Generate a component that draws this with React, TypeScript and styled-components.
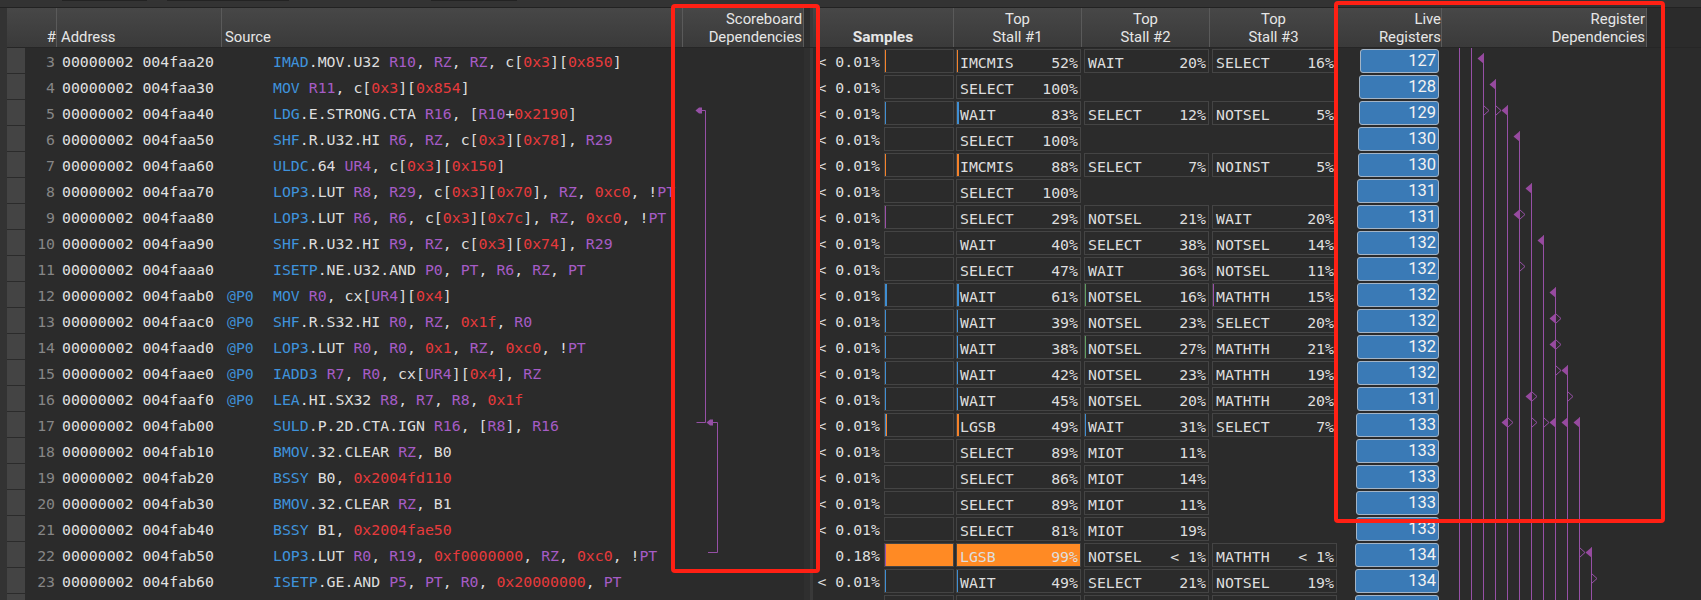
import React from "react";
import styled, { createGlobalStyle, css } from "styled-components";

const GlobalStyle = createGlobalStyle`
  html, body { margin: 0; padding: 0; background: #2b2b2b; overflow: hidden; }
`;

const ORANGE = "#f5822a";
const BLUE = "#3f8ed2";
const PURPLE = "#9a4fa8";
const GREEN = "#5f9f62";
const COLUMNS = "50px 165px 461px 121px 9px 141px 128px 128px 128px 104px 205px";
const MONO = `"DejaVu Sans Mono", "Liberation Mono", monospace`;

const Page = styled.div`
  position: relative;
  width: 1701px;
  height: 600px;
  overflow: hidden;
  background: #2b2b2b;
  font-family: Roboto, "Liberation Sans", sans-serif;
`;

const TopStrip = styled.div`
  display: flex;
  height: 7px;
  padding-left: 62px;
  background: #333333;
  border-bottom: 1px solid #222222;
`;

const StripButton = styled.div<{ $width: number; $skip: number }>`
  width: ${(p) => p.$width}px;
  margin-left: ${(p) => p.$skip}px;
  height: 1px;
  background: #232323;
`;

const Table = styled.div`
  display: flex;
  height: 592px;
`;

const SideMargin = styled.div`
  width: 7px;
  flex: none;
  background: #333333;
`;

const Grid = styled.div`
  flex: 1;
  min-width: 0;
`;

const HeaderRow = styled.div`
  display: grid;
  grid-template-columns: ${COLUMNS} 1fr;
  height: 39px;
  border-bottom: 1px solid #262626;
`;

const HeaderCell = styled.div<{ $align?: "left" | "right" | "center"; $bold?: boolean; $pad?: number }>`
  box-sizing: border-box;
  height: 39px;
  display: flex;
  flex-direction: column;
  justify-content: flex-end;
  padding: 0 ${(p) => p.$pad ?? 1}px 1px ${(p) => p.$pad ?? 1}px;
  background: linear-gradient(#474747, #3a3a3a);
  border-right: 1px solid #5a5a5a;
  color: #e6e6e6;
  font-size: ${(p) => (p.$bold ? 15.5 : 14.85)}px;
  line-height: 17.5px;
  white-space: nowrap;
  text-align: ${(p) => p.$align ?? "left"};
  font-weight: ${(p) => (p.$bold ? 700 : 400)};
`;

const HeaderSplitter = styled.div`
  height: 39px;
  background: linear-gradient(90deg, #2e2e2e 0 6px, #3a3a3a 6px);
`;

const HeaderRest = styled.div`
  background: #2b2b2b;
`;

const Row = styled.div`
  display: grid;
  grid-template-columns: ${COLUMNS} 1fr;
  height: 26px;
  font-family: ${MONO};
  font-size: 14.85px;
  color: #dedede;
  white-space: nowrap;
`;

const IndexCell = styled.div`
  display: flex;
  justify-content: space-between;
  line-height: 28px;
  padding-right: 2px;
  color: #868686;
`;

const GutterTile = styled.div`
  width: 18px;
  height: 25px;
  background: #444444;
`;

const AddressCell = styled.div`
  padding-left: 5px;
  line-height: 28px;
  color: #e0e0e0;
`;

const SourceCell = styled.div`
  display: flex;
  line-height: 28px;
  padding-left: 5px;
`;

const Predicate = styled.span`
  width: 46px;
  flex: none;
  color: ${BLUE};
`;

const Token = styled.span<{ $kind: "op" | "reg" | "hex" | "text" }>`
  color: ${(p) =>
    ({ op: "#3f93dc", reg: "#a65cc6", hex: "#e63a3c", text: "#dedede" })[p.$kind]};
`;

const EmptyCell = styled.div``;

const SplitterCell = styled.div`
  background: linear-gradient(90deg, #2f2f2f 0 6px, #393939 6px);
`;

const SamplesCell = styled.div`
  display: flex;
  justify-content: flex-end;
  align-items: flex-start;
  gap: 4px;
  line-height: 28px;
`;

const Box = styled.div<{ $filled?: boolean }>`
  box-sizing: border-box;
  display: flex;
  height: 24px;
  margin-top: 1px;
  border: 1px solid #444444;
  background: ${(p) => (p.$filled ? "#ff8a24" : "transparent")};
`;

const BarBox = styled(Box)`
  width: 70px;
  flex: none;
`;

const StallBox = styled(Box)`
  position: relative;
  justify-content: space-between;
  margin-left: 2px;
  margin-right: 1px;
  padding: 0 2px 0 3px;
  line-height: 26px;
  color: #dedede;
`;

const Accent = styled.div<{ $color: string; $w: number }>`
  flex: none;
  width: ${(p) => p.$w}px;
  height: 100%;
  background: ${(p) => p.$color};
`;

const StallAccent = styled(Accent)`
  position: absolute;
  left: 0;
  top: 0;
`;

const LiveCell = styled.div`
  display: flex;
  justify-content: flex-end;
  padding-right: 3px;
`;

const Pill = styled.div`
  box-sizing: border-box;
  height: 24px;
  margin-top: 1px;
  padding-right: 2px;
  border: 1px solid #a3b4c6;
  border-radius: 3px;
  background: #3a7ab6;
  color: #f2f2f2;
  font-family: Roboto, "Liberation Sans", sans-serif;
  font-size: 16.5px;
  line-height: 22px;
  text-align: right;
`;

const DepOverlay = styled.svg`
  position: absolute;
  left: 0;
  top: 0;
  pointer-events: none;
`;

const Callout = styled.div<{ $variant: "scoreboard" | "register" }>`
  position: absolute;
  box-sizing: border-box;
  border: 4px solid #ff2014;
  border-radius: 4px;
  pointer-events: none;
  ${(p) =>
    p.$variant === "scoreboard"
      ? css`
          left: 671px;
          top: 4px;
          width: 149px;
          height: 569px;
        `
      : css`
          left: 1334px;
          top: 1px;
          width: 331px;
          height: 522px;
        `}
`;

type Stall = { name: string; pct: string; accent?: [string, number]; fill?: boolean };
type RowData = {
  n: number;
  addr: string;
  pred?: boolean;
  src: string;
  samples: string;
  bar?: [string, number][];
  fill?: boolean;
  stalls: Stall[];
  live: number;
};

const s = (name: string, pct: string, accent?: [string, number], fill?: boolean): Stall => ({ name, pct, accent, fill });
const LT = "< 0.01%";

const rows: RowData[] = [
  { n: 3, addr: "004faa20", src: "IMAD.MOV.U32 R10, RZ, RZ, c[0x3][0x850]", samples: LT, bar: [[ORANGE, 1]], stalls: [s("IMCMIS", "52%", [ORANGE, 1]), s("WAIT", "20%"), s("SELECT", "16%")], live: 127 },
  { n: 4, addr: "004faa30", src: "MOV R11, c[0x3][0x854]", samples: LT, stalls: [s("SELECT", "100%")], live: 128 },
  { n: 5, addr: "004faa40", src: "LDG.E.STRONG.CTA R16, [R10+0x2190]", samples: LT, bar: [[BLUE, 1]], stalls: [s("WAIT", "83%", [BLUE, 2]), s("SELECT", "12%"), s("NOTSEL", "5%")], live: 129 },
  { n: 6, addr: "004faa50", src: "SHF.R.U32.HI R6, RZ, c[0x3][0x78], R29", samples: LT, stalls: [s("SELECT", "100%")], live: 130 },
  { n: 7, addr: "004faa60", src: "ULDC.64 UR4, c[0x3][0x150]", samples: LT, bar: [[ORANGE, 1]], stalls: [s("IMCMIS", "88%", [ORANGE, 2]), s("SELECT", "7%"), s("NOINST", "5%")], live: 130 },
  { n: 8, addr: "004faa70", src: "LOP3.LUT R8, R29, c[0x3][0x70], RZ, 0xc0, !PT", samples: LT, stalls: [s("SELECT", "100%")], live: 131 },
  { n: 9, addr: "004faa80", src: "LOP3.LUT R6, R6, c[0x3][0x7c], RZ, 0xc0, !PT", samples: LT, bar: [[PURPLE, 1]], stalls: [s("SELECT", "29%"), s("NOTSEL", "21%"), s("WAIT", "20%")], live: 131 },
  { n: 10, addr: "004faa90", src: "SHF.R.U32.HI R9, RZ, c[0x3][0x74], R29", samples: LT, stalls: [s("WAIT", "40%"), s("SELECT", "38%"), s("NOTSEL", "14%")], live: 132 },
  { n: 11, addr: "004faaa0", src: "ISETP.NE.U32.AND P0, PT, R6, RZ, PT", samples: LT, stalls: [s("SELECT", "47%"), s("WAIT", "36%"), s("NOTSEL", "11%")], live: 132 },
  { n: 12, addr: "004faab0", pred: true, src: "MOV R0, cx[UR4][0x4]", samples: LT, bar: [[BLUE, 2]], stalls: [s("WAIT", "61%", [BLUE, 2]), s("NOTSEL", "16%", [GREEN, 1]), s("MATHTH", "15%", [PURPLE, 1])], live: 132 },
  { n: 13, addr: "004faac0", pred: true, src: "SHF.R.S32.HI R0, RZ, 0x1f, R0", samples: LT, bar: [[BLUE, 1]], stalls: [s("WAIT", "39%", [BLUE, 1]), s("NOTSEL", "23%"), s("SELECT", "20%")], live: 132 },
  { n: 14, addr: "004faad0", pred: true, src: "LOP3.LUT R0, R0, 0x1, RZ, 0xc0, !PT", samples: LT, bar: [[BLUE, 1]], stalls: [s("WAIT", "38%", [BLUE, 1]), s("NOTSEL", "27%", [GREEN, 1]), s("MATHTH", "21%")], live: 132 },
  { n: 15, addr: "004faae0", pred: true, src: "IADD3 R7, R0, cx[UR4][0x4], RZ", samples: LT, bar: [[BLUE, 1]], stalls: [s("WAIT", "42%", [BLUE, 1]), s("NOTSEL", "23%"), s("MATHTH", "19%")], live: 132 },
  { n: 16, addr: "004faaf0", pred: true, src: "LEA.HI.SX32 R8, R7, R8, 0x1f", samples: LT, bar: [[BLUE, 1]], stalls: [s("WAIT", "45%", [BLUE, 1]), s("NOTSEL", "20%"), s("MATHTH", "20%")], live: 131 },
  { n: 17, addr: "004fab00", src: "SULD.P.2D.CTA.IGN R16, [R8], R16", samples: LT, bar: [[BLUE, 1], [ORANGE, 1]], stalls: [s("LGSB", "49%", [ORANGE, 2]), s("WAIT", "31%", [BLUE, 1]), s("SELECT", "7%")], live: 133 },
  { n: 18, addr: "004fab10", src: "BMOV.32.CLEAR RZ, B0", samples: LT, stalls: [s("SELECT", "89%"), s("MIOT", "11%")], live: 133 },
  { n: 19, addr: "004fab20", src: "BSSY B0, 0x2004fd110", samples: LT, stalls: [s("SELECT", "86%"), s("MIOT", "14%")], live: 133 },
  { n: 20, addr: "004fab30", src: "BMOV.32.CLEAR RZ, B1", samples: LT, stalls: [s("SELECT", "89%"), s("MIOT", "11%")], live: 133 },
  { n: 21, addr: "004fab40", src: "BSSY B1, 0x2004fae50", samples: LT, stalls: [s("SELECT", "81%"), s("MIOT", "19%")], live: 133 },
  { n: 22, addr: "004fab50", src: "LOP3.LUT R0, R19, 0xf0000000, RZ, 0xc0, !PT", samples: "0.18%", bar: [[PURPLE, 1]], fill: true, stalls: [s("LGSB", "99%", undefined, true), s("NOTSEL", "< 1%"), s("MATHTH", "< 1%")], live: 134 },
  { n: 23, addr: "004fab60", src: "ISETP.GE.AND P5, PT, R0, 0x20000000, PT", samples: LT, bar: [[BLUE, 1]], stalls: [s("WAIT", "49%", [BLUE, 1]), s("SELECT", "21%"), s("NOTSEL", "19%")], live: 134 },
];

function tokenize(src: string) {
  const dot = src.search(/[. ]/);
  const out: { kind: "op" | "reg" | "hex" | "text"; text: string }[] = [{ kind: "op", text: src.slice(0, dot) }];
  const re = /(0x[0-9a-f]+)|\b(UR\d+|R\d+|RZ|P\d+|PT)\b/g;
  const rest = src.slice(dot);
  let last = 0;
  let m: RegExpExecArray | null;
  while ((m = re.exec(rest))) {
    if (m.index > last) out.push({ kind: "text", text: rest.slice(last, m.index) });
    out.push({ kind: m[1] ? "hex" : "reg", text: m[0] });
    last = m.index + m[0].length;
  }
  if (last < rest.length) out.push({ kind: "text", text: rest.slice(last) });
  return out;
}

const pillWidth = (live: number) => Math.round((live - 127) * 0.65 + 79);

const LANE = (i: number) => 1459.5 + 12 * i;
const ROW_MID = (n: number) => 48 + (n - 3) * 26 + 10.5;
const LINE = "#9650a6";

// lane index and first y of each register lifetime
const lanes: [number, number][] = [
  [0, 48], [1, 48], [2, ROW_MID(3) - 5], [3, ROW_MID(4) - 5], [4, ROW_MID(5) - 5], [5, ROW_MID(6) - 5],
  [6, ROW_MID(8) - 5], [7, ROW_MID(10) - 5], [8, ROW_MID(12) - 5], [9, ROW_MID(15) - 5], [10, ROW_MID(17) - 5], [11, ROW_MID(22) - 5],
];
// row, lane, defines (filled, left), uses (hollow, right)
const marks: [number, number, boolean, boolean][] = [
  [3, 2, true, false], [4, 3, true, false], [5, 2, false, true], [5, 3, false, true], [5, 4, true, false],
  [6, 5, true, false], [8, 6, true, false], [9, 5, true, true], [10, 7, true, false], [11, 5, false, true],
  [12, 8, true, false], [13, 8, true, true], [14, 8, true, true], [15, 8, false, true], [15, 9, true, false],
  [16, 6, true, true], [16, 9, false, true], [17, 4, true, true], [17, 6, false, true], [17, 7, false, true],
  [17, 8, true, false], [17, 9, true, false], [17, 10, true, false], [22, 10, false, true], [22, 11, true, false], [23, 11, false, true],
];

function DependencyGraphs() {
  return (
    <DepOverlay width={1701} height={600} viewBox="0 0 1701 600">
      <g fill="none" stroke={LINE} strokeWidth={1}>
        <path d="M696.5 110.5H705.5V422.5H696.5" />
        <path d="M708 552.5H717.5V422.5H708" />
        {lanes.map(([l, y]) => (
          <path key={l} d={`M${LANE(l)} ${y}V600`} />
        ))}
      </g>
      <g fill={LINE} stroke="none">
        <path d="M695.5 110.5L699 107.5H702V113.5H699Z" />
        <path d="M706.5 422.5L710 419.5H713V425.5H710Z" />
      </g>
      {marks.map(([row, lane, def, use]) => {
        const x = LANE(lane);
        const y = ROW_MID(row);
        return (
          <g key={`${row}-${lane}`}>
            {def && <path d={`M${x + 0.5} ${y - 5.5}L${x - 6} ${y}L${x + 0.5} ${y + 5.5}Z`} fill="#964a9f" />}
            {use && <path d={`M${x} ${y - 5}L${x + 5.5} ${y}L${x} ${y + 5}`} fill="none" stroke={LINE} strokeWidth={1} />}
          </g>
        );
      })}
    </DepOverlay>
  );
}

function StallCell({ stall }: { stall?: Stall }) {
  if (!stall) return <EmptyCell />;
  return (
    <StallBox $filled={stall.fill}>
      {stall.accent && <StallAccent $color={stall.accent[0]} $w={stall.accent[1]} />}
      <span>{stall.name}</span>
      <span>{stall.pct}</span>
    </StallBox>
  );
}

export default function App() {
  return (
    <Page>
      <GlobalStyle />
      <TopStrip>
        <StripButton $width={85} $skip={0} />
        <StripButton $width={122} $skip={20} />
        <StripButton $width={86} $skip={142} />
      </TopStrip>
      <Table>
        <SideMargin />
        <Grid>
          <HeaderRow>
            <HeaderCell $align="right" $pad={0}>#</HeaderCell>
            <HeaderCell $pad={4}>Address</HeaderCell>
            <HeaderCell $pad={3}>Source</HeaderCell>
            <HeaderCell $align="right">
              <span>Scoreboard</span>
              <span>Dependencies</span>
            </HeaderCell>
            <HeaderSplitter />
            <HeaderCell $align="center" $bold>Samples</HeaderCell>
            {["#1", "#2", "#3"].map((k) => (
              <HeaderCell key={k} $align="center">
                <span>Top</span>
                <span>Stall {k}</span>
              </HeaderCell>
            ))}
            <HeaderCell $align="right" $pad={0}>
              <span>Live</span>
              <span>Registers</span>
            </HeaderCell>
            <HeaderCell $align="right">
              <span>Register</span>
              <span>Dependencies</span>
            </HeaderCell>
            <HeaderRest />
          </HeaderRow>
          {rows.map((r) => (
            <Row key={r.n}>
              <IndexCell>
                <GutterTile />
                <span>{r.n}</span>
              </IndexCell>
              <AddressCell>00000002 {r.addr}</AddressCell>
              <SourceCell>
                <Predicate>{r.pred ? "@P0" : ""}</Predicate>
                <span>
                  {tokenize(r.src).map((t, i) => (
                    <Token key={i} $kind={t.kind}>{t.text}</Token>
                  ))}
                </span>
              </SourceCell>
              <EmptyCell />
              <SplitterCell />
              <SamplesCell>
                <span>{r.samples}</span>
                <BarBox $filled={r.fill}>
                  {(r.bar ?? []).map(([c, w], i) => (
                    <Accent key={i} $color={c} $w={w} />
                  ))}
                </BarBox>
              </SamplesCell>
              <StallCell stall={r.stalls[0]} />
              <StallCell stall={r.stalls[1]} />
              <StallCell stall={r.stalls[2]} />
              <LiveCell>
                <Pill style={{ width: pillWidth(r.live) }}>{r.live}</Pill>
              </LiveCell>
              <EmptyCell />
              <EmptyCell />
            </Row>
          ))}
          <Row>
            <IndexCell>
              <GutterTile />
            </IndexCell>
            <EmptyCell />
            <EmptyCell />
            <EmptyCell />
            <SplitterCell />
            <SamplesCell>
              <BarBox />
            </SamplesCell>
            <StallBox />
            <StallBox />
            <StallBox />
            <LiveCell>
              <Pill style={{ width: pillWidth(134) }} />
            </LiveCell>
            <EmptyCell />
            <EmptyCell />
          </Row>
        </Grid>
      </Table>
      <DependencyGraphs />
      <Callout $variant="scoreboard" />
      <Callout $variant="register" />
    </Page>
  );
}
